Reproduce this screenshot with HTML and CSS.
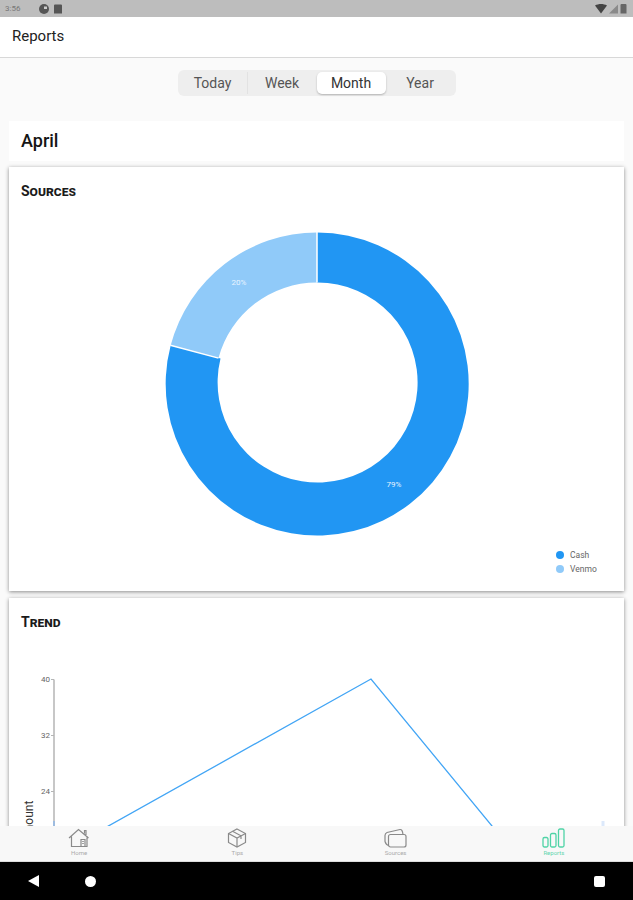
FILE: index.html
```html
<!DOCTYPE html>
<html lang="en">
<head>
<meta charset="utf-8">
<title>Reports</title>
<link rel="stylesheet" href="styles.css">
</head>
<body>
<div class="screen">
  <div class="status">
    <span class="time">3:56</span>
    <svg class="st-icon" width="12" height="12" viewBox="0 0 12 12"><circle cx="6" cy="6" r="5" fill="#555"/><path d="M6 3.5h3v2.5H6z" fill="#ccc"/></svg>
    <svg class="st-icon" width="10" height="12" viewBox="0 0 10 12"><path d="M2 1.5h6a1 1 0 0 1 1 1v8H1v-8a1 1 0 0 1 1-1z" fill="#555"/></svg>
    <span class="spacer"></span>
    <svg width="12" height="10" viewBox="0 0 12 10"><path d="M0 1.5C3.500-.5 8.500-.5 12 1.500L6 9.500z" fill="#444"/></svg>
    <svg class="st-gap" width="9" height="10" viewBox="0 0 9 10"><path d="M9 .5V9.500H0z" fill="#8a8a8a"/></svg>
    <svg class="st-gap" width="7" height="11" viewBox="0 0 7 11"><path d="M1.500 1H5.500a1 1 0 0 1 1 1v8.500H.5V2a1 1 0 0 1 1-1z" fill="#666"/></svg>
  </div>
  <header class="appbar">Reports</header>
  <main class="content">
    <div class="segment">
      <div class="seg-item seg-first">Today</div>
      <div class="seg-item">Week</div>
      <div class="seg-item seg-active">Month</div>
      <div class="seg-item">Year</div>
    </div>
    <section class="month-card">April</section>
    <section class="card sources-card">
      <h2 class="card-title">Sources</h2>
      <svg class="donut" width="615" height="330" viewBox="0 0 615 330">
        <path d="M308 22.500A151.500 151.500 0 1 1 161.700 135.300L211.500 148.600A100 100 0 1 0 308 72.500Z" fill="#2196f3" transform="translate(0 0)"/>
        <path d="M308 22.500V72.500A102 102 0 0 0 209.500 148.100L161.700 135.300A151.500 151.500 0 0 1 308 22.500Z" fill="#90caf9"/>
        <path d="M308 22V72.500M161.300 135.200L209.500 148.100" stroke="#fff" stroke-width="1.500" fill="none"/>
        <text x="230" y="75" class="slice-label" text-anchor="middle">20%</text>
        <text x="385" y="277" class="slice-label" text-anchor="middle">79%</text>
      </svg>
      <div class="legend">
        <div class="legend-row"><span class="dot dot-cash"></span>Cash</div>
        <div class="legend-row"><span class="dot dot-venmo"></span>Venmo</div>
      </div>
    </section>
    <section class="card trend-card">
      <h2 class="card-title">Trend</h2>
      <svg class="trend" width="615" height="260" viewBox="0 0 615 260">
        <path d="M45 32.500V260" stroke="#b5b5b5" stroke-width="1.500" fill="none"/>
        <path d="M45 174V260" stroke="#90b8e8" stroke-width="1.500" fill="none"/>
        <path d="M42 32.500h3M42 88.500h3M42 144.500h3" stroke="#b5b5b5" fill="none"/>
        <text x="41" y="35" class="tick" text-anchor="end">40</text>
        <text x="41" y="91" class="tick" text-anchor="end">32</text>
        <text x="41" y="147" class="tick" text-anchor="end">24</text>
        <text class="axis-label" transform="translate(24 196) rotate(-90)">Amount</text>
        <path d="M69 196L362 32L497 196L530 236" stroke="#42a5f5" stroke-width="1.300" fill="none"/>
        <path d="M594 174V260" stroke="#dce9fb" stroke-width="3" fill="none"/>
      </svg>
    </section>
  </main>
  <nav class="tabbar">
    <div class="tab">
      <svg width="22" height="20" viewBox="0 0 22 20" fill="none" stroke="#8a8a8a" stroke-width="1.200"><path d="M1 10L10.500 1.500L20.500 10M3.500 8.500V18.500H19V8M16.500 5.500V2.500H18V7M13 18.500V11.500H17V18.500"/><path d="M14 13.500h2M14 15.500h2" stroke-width=".8"/></svg>
      <span class="tab-label">Home</span>
    </div>
    <div class="tab">
      <svg width="20" height="20" viewBox="0 0 20 20" fill="none" stroke="#8a8a8a" stroke-width="1.200"><path d="M10 1L18.500 5.500V14.500L10 19L1.500 14.500V5.500Z"/><path d="M1.500 5.500L10 10L18.500 5.500M10 10V19M5.500 3.300L14 7.800V11"/></svg>
      <span class="tab-label">Tips</span>
    </div>
    <div class="tab">
      <svg width="23" height="20" viewBox="0 0 23 20" fill="none" stroke="#8a8a8a" stroke-width="1.200"><rect x="4.500" y="6.500" width="17.500" height="12.500" rx="2"/><path d="M4.500 17.500C2.500 17 1.500 15 1 13.500L1 7.500C1 6 1.800 5 3 4.500L16 1.500C17.500 1.300 18.500 2.500 19 6.500"/></svg>
      <span class="tab-label">Sources</span>
    </div>
    <div class="tab tab-active">
      <svg width="23" height="20" viewBox="0 0 23 20" fill="none" stroke="#4fd3a6" stroke-width="1.300"><rect x="1" y="9.500" width="5" height="9.500" rx="1.500"/><rect x="8.500" y="5.500" width="5.500" height="13.500" rx="1.500"/><rect x="16.500" y="1" width="5.500" height="18" rx="1.500"/></svg>
      <span class="tab-label">Reports</span>
    </div>
  </nav>
  <div class="sysnav">
    <svg width="11" height="12" viewBox="0 0 11 12"><path d="M11 0V12L0 6Z" fill="#fff"/></svg>
    <span class="sys-home"></span>
    <span class="spacer"></span>
    <span class="sys-recent"></span>
  </div>
</div>
</body>
</html>
```
FILE: styles.css
```css
* { box-sizing: border-box; }
html, body { margin: 0; padding: 0; }
body { font-family: Roboto, "Liberation Sans", sans-serif; background: #fafafa; }
.screen { width: 633px; height: 900px; display: flex; flex-direction: column; overflow: hidden; }
.status { height: 17px; flex: none; background: #bdbdbd; display: flex; align-items: center; padding: 0 6px 0 5px; }
.time { font-size: 8px; color: #777; width: 28px; }
.st-icon { margin-left: 5px; }
.st-icon + .st-icon { margin-left: 3px; }
.st-gap { margin-left: 2px; }
.spacer { flex: 1; }
.appbar { height: 41px; flex: none; background: #fff; border-bottom: 1px solid #d8d8d8; font-size: 15px; line-height: 39px; padding-left: 12px; color: #222; }
.content { flex: 1; min-height: 0; overflow: hidden; padding: 12px 9px 0; display: flex; flex-direction: column; background: #fafafa; }
.segment { flex: none; align-self: center; width: 278px; height: 26px; background: #eee; border-radius: 6px; display: grid; grid-template-columns: repeat(4, 1fr); padding: 2px 1px; margin-bottom: 25px; }
.seg-item { font-size: 14px; line-height: 22px; text-align: center; color: #555; }
.seg-first { border-right: 1px solid #e2e2e2; }
.seg-active { background: #fff; color: #333; border-radius: 5px; box-shadow: 0 1px 2px rgba(0,0,0,.25); }
.month-card { flex: none; height: 40px; background: #fff; font-size: 18px; font-weight: 500; line-height: 40px; padding-left: 12px; color: #151515; margin-bottom: 6px; }
.card { flex: none; background: #fff; box-shadow: 0 1px 4px rgba(0,0,0,.45); }
.card-title { margin: 0; padding: 15px 0 0 12px; font-size: 14px; line-height: 18px; font-weight: 700; font-variant: small-caps; color: #1a1a1a; }
.sources-card { height: 424px; margin-bottom: 7px; }
.donut { display: block; margin-top: 10px; }
.slice-label { font-size: 8px; fill: #e8f4ff; font-family: Roboto, sans-serif; }
.legend { display: flex; flex-direction: column; align-items: flex-end; padding: 8px 23px 0 0; }
.legend-row { width: 45px; height: 14px; display: flex; align-items: center; font-size: 8.500px; color: #666; }
.dot { width: 8px; height: 8px; border-radius: 50%; margin-right: 6px; }
.dot-cash { background: #2196f3; }
.dot-venmo { background: #90caf9; }
.trend-card { height: 320px; }
.trend { display: block; margin-top: 16px; }
.tick { font-size: 8px; fill: #666; font-family: Roboto, sans-serif; }
.axis-label { font-size: 12px; fill: #333; font-family: Roboto, sans-serif; }
.tabbar { height: 36px; flex: none; background: #f8f8f8; display: grid; grid-template-columns: repeat(4, 1fr); border-bottom: 1px solid #ddd; position: relative; }
.tab { display: flex; flex-direction: column; align-items: center; padding-top: 2px; }
.tab-label { font-size: 6px; line-height: 8px; color: #aaa; margin-top: 1px; }
.tab-active .tab-label { color: #62d6ae; }
.sysnav { height: 38px; flex: none; background: #000; display: flex; align-items: center; padding: 0 28px 0 28px; }
.sys-home { width: 11px; height: 11px; border-radius: 50%; background: #fff; margin-left: 46px; }
.sys-recent { width: 11px; height: 11px; border-radius: 2px; background: #fff; }
```
